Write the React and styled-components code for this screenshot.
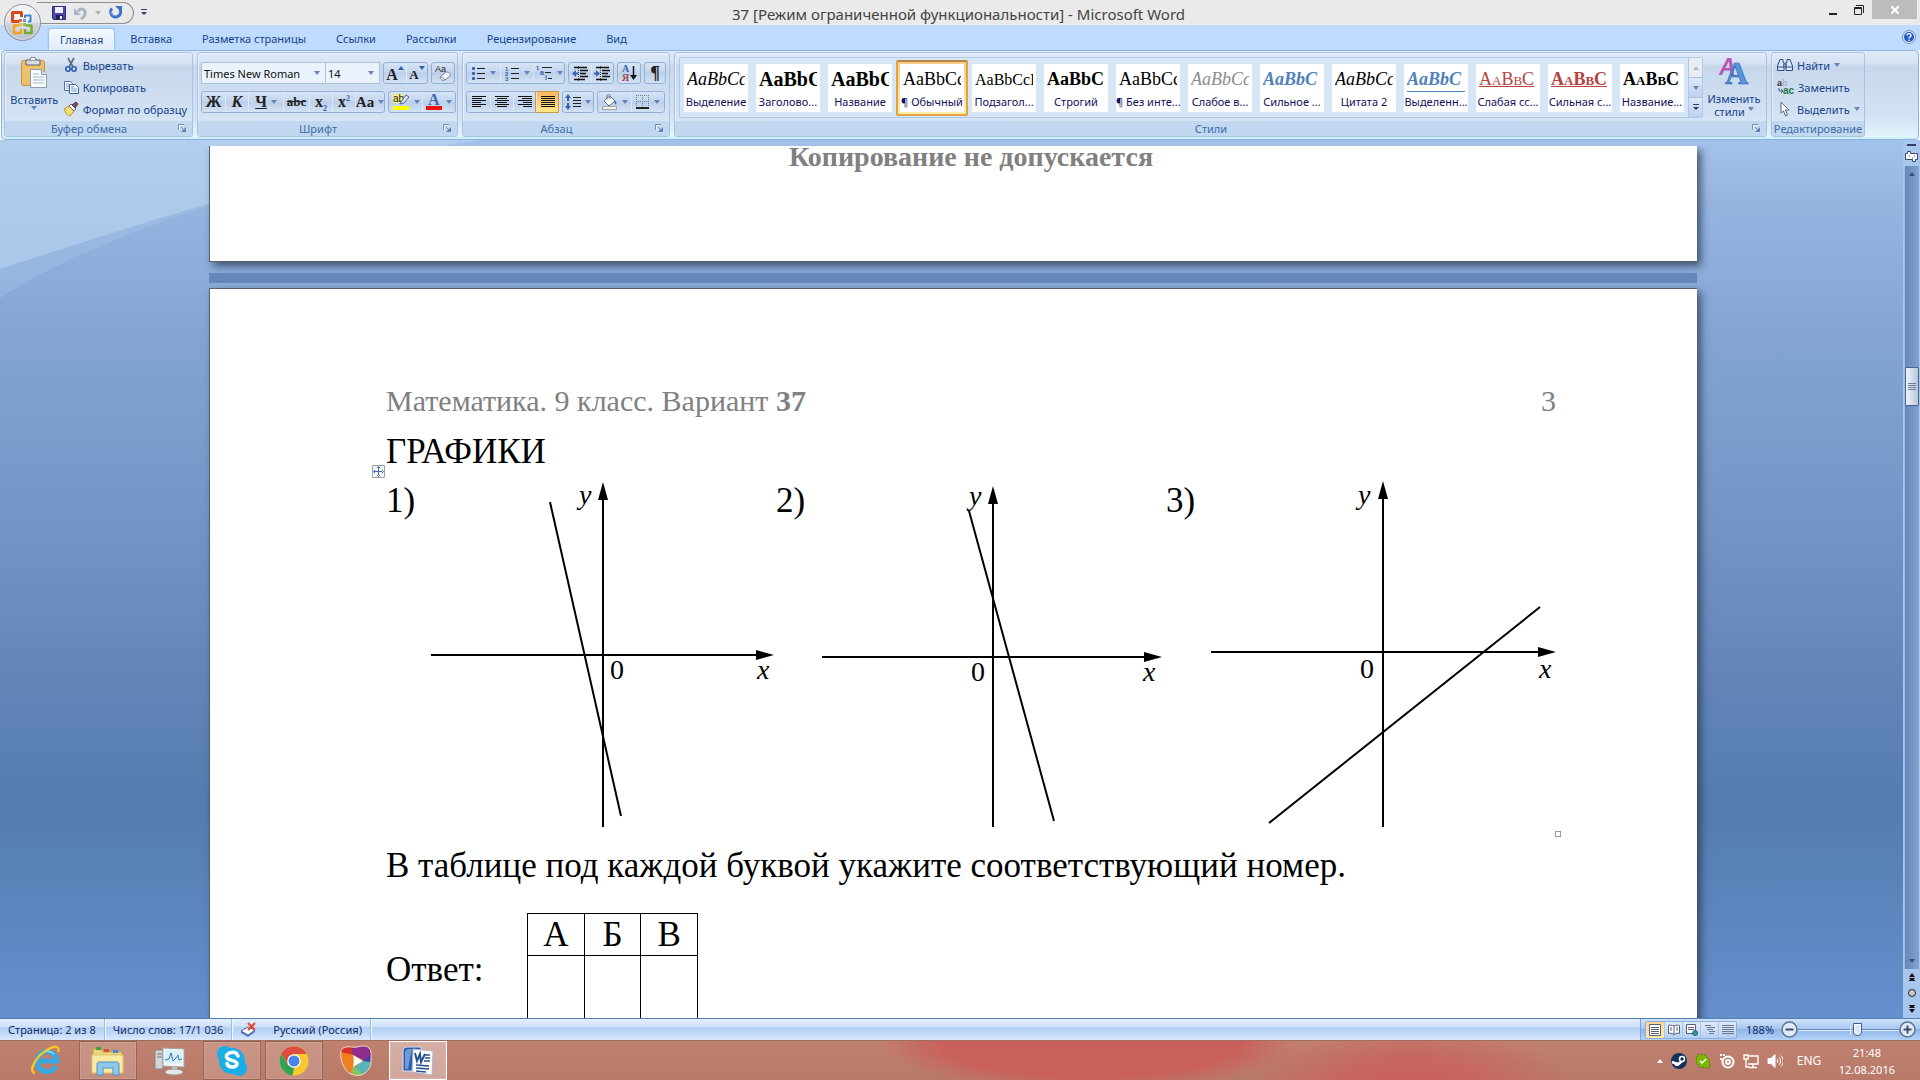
import React, { useState } from 'react';
import styled, { createGlobalStyle, css } from 'styled-components';

const GlobalStyle = createGlobalStyle`
  * {
    box-sizing: border-box;
  }

  body {
    margin: 0;
    overflow: hidden;
    font-family: "Noto Sans", "Open Sans", sans-serif;
    font-size: 11px;
    color: #15428b;
  }

  button, select, input {
    font: inherit;
    color: inherit;
    margin: 0;
    padding: 0;
    border: 0;
    background: none;
  }

  svg {
    display: block;
    flex: none;
  }
`;

const Window = styled.div`
  display: flex;
  flex-direction: column;
  height: 100vh;
`;

/* ---------- title bar ---------- */

const TitleBar = styled.header`
  position: relative;
  display: flex;
  align-items: flex-start;
  height: 25px;
  background: #eaeaea;
`;

const OrbButton = styled.button`
  position: absolute;
  left: 3px;
  top: 3px;
  z-index: 2;
`;

const QuickAccess = styled.div`
  display: flex;
  align-items: center;
  gap: 8px;
  height: 22px;
  width: 97px;
  margin: 2px 0 0 37px;
  padding-left: 15px;
  border: 1px solid #8f8f8f;
  border-left: 0;
  border-radius: 0 11px 11px 0;
`;

const QuickRow = styled.div`
  display: flex;
  flex: 1;
  align-items: center;
  gap: 7px;
`;

const Title = styled.h1`
  margin: 0;
  padding-top: 3px;
  font-size: 15px;
  line-height: 22px;
  font-weight: 400;
  color: #444;
`;

const WindowButtons = styled.div`
  display: flex;
  flex: 1;
  justify-content: flex-end;
  padding-right: 3px;
`;

const WindowButton = styled.button`
  display: flex;
  align-items: center;
  justify-content: center;
  width: ${(p) => (p.$close ? '45px' : '26px')};
  height: 19px;
  background: ${(p) => (p.$close ? '#bcbcbc' : 'transparent')};
`;

/* ---------- tabs ---------- */

const Tabs = styled.nav`
  display: flex;
  align-items: flex-end;
  height: 25px;
  padding: 0 4px 0 48px;
  background: #bfdbff;
`;

const Tab = styled.button`
  height: 22px;
  padding: 0 ${(p) => (p.$active ? '11px' : '15px')};
  line-height: 22px;
  white-space: nowrap;
  ${(p) =>
    p.$active &&
    css`
      background: linear-gradient(#f4f9ff, #e2ecf8);
      border: 1px solid #9fc4ee;
      border-bottom: 0;
      border-radius: 4px 4px 0 0;
      box-shadow: 0 0 2px #7fd6e8;
    `}
`;

const HelpButton = styled.button`
  margin: 0 0 6px auto;
`;

/* ---------- ribbon ---------- */

const Ribbon = styled.section`
  display: flex;
  gap: 4px;
  height: 90px;
  margin: 0 1px;
  padding: 1px 53px 2px 2px;
  border: 1px solid #8db2e3;
  border-radius: 4px;
  background: linear-gradient(#e0ebf8 0, #d5e2f2 14%, #c8d8ec 17%, #d3e3f4 75%, #e3f6fd 100%);
  box-shadow: inset 0 -2px 0 #cdf1f8;
`;

const Group = styled.div`
  display: flex;
  flex-direction: column;
  flex: ${(p) => (p.$width ? 'none' : '1')};
  width: ${(p) => (p.$width ? `${p.$width}px` : 'auto')};
  min-width: 0;
  border: 1px solid #a9c3e2;
  border-radius: 3px;
  box-shadow: inset 1px 1px 0 #e7f0fa;
`;

const GroupBody = styled.div`
  display: flex;
  flex: 1;
  min-height: 0;
  padding: ${(p) => p.$pad || '0 3px'};
  gap: ${(p) => p.$gap || '0'};
`;

const GroupLabel = styled.div`
  display: flex;
  align-items: center;
  height: 15px;
  line-height: 15px;
  color: #3e6aaa;
  background: #c1d8f0;
  border-radius: 0 0 2px 2px;

  span {
    flex: 1;
    text-align: center;
  }

  button {
    padding: 0 5px;
  }
`;

const BigButton = styled.button`
  display: flex;
  flex-direction: column;
  align-items: center;
  width: ${(p) => p.$width}px;
  padding-top: 4px;
  line-height: 13px;

  svg:first-child {
    margin-bottom: 5px;
  }
`;

const BigLine = styled.span`
  display: flex;
  align-items: center;
  gap: 3px;
`;

const SmallStack = styled.div`
  display: flex;
  flex-direction: column;
  padding-top: 1px;
`;

const SmallButton = styled.button`
  display: flex;
  align-items: center;
  gap: 4px;
  height: 22px;
  padding: 0 2px;
  white-space: nowrap;
`;

const Rows = styled.div`
  display: flex;
  flex-direction: column;
  gap: 7px;
  padding-top: 9px;
`;

const Row = styled.div`
  display: flex;
  gap: 3px;
`;

const Cluster = styled.div`
  display: flex;
  height: 22px;
  border: 1px solid #93b1d8;
  border-radius: 3px;
  background: linear-gradient(#d6e4f5, #c4d6ee 45%, #bccfe9 50%, #d3e2f4);
`;

const Tool = styled.button`
  display: flex;
  align-items: center;
  justify-content: center;
  gap: 4px;
  width: ${(p) => p.$width || 23}px;
  color: #222;

  & + & {
    border-left: 1px solid #dce8f6;
  }

  ${(p) =>
    p.$on &&
    css`
      background: linear-gradient(#fbb964, #fdd072 50%, #ffe58c);
      box-shadow: 0 0 0 1px #c99a4c;
    `}
`;

const SizeTool = styled(Tool)`
  gap: 0;
  align-items: flex-start;
  padding-top: 3px;
`;

const Glyph = styled.span`
  font-family: "Liberation Serif", serif;
  font-size: ${(p) => p.$size || 16}px;
  line-height: 18px;
  font-weight: 700;
  font-style: ${(p) => (p.$italic ? 'italic' : 'normal')};
  text-decoration: ${(p) => p.$deco || 'none'};

  sub, sup {
    font-size: 8px;
    line-height: 0;
    color: #2f62ad;
  }
`;

const Combo = styled.div`
  display: flex;
  align-items: center;
  width: ${(p) => p.$width}px;
  height: 22px;
  padding-right: 5px;
  border: 1px solid #abc1de;
  background: #eaf2fb;

  & + & {
    border-left: 0;
  }

  select {
    flex: 1;
    min-width: 0;
    height: 20px;
    padding-left: 2px;
    color: #111;
    appearance: none;
    outline: none;
  }
`;

const Combos = styled.div`
  display: flex;
`;

/* ---------- style gallery ---------- */

const Gallery = styled.div`
  display: flex;
  flex: 1;
  min-width: 0;
  height: 61px;
  margin-top: 4px;
  border: 1px solid #b1c9e8;
  border-radius: 2px;
  background: #d7e6f7;
`;

const GalleryItems = styled.div`
  display: flex;
  flex: 1;
  align-items: center;
  min-width: 0;
  overflow: hidden;
`;

const GalleryItem = styled.button`
  display: flex;
  flex-direction: column;
  flex: none;
  width: 72px;
  height: 56px;
  padding: 4px;
  ${(p) =>
    p.$selected &&
    css`
      border: 2px solid #e2a344;
      border-top-color: #b98549;
      border-radius: 2px;
      padding: 2px;
      background: linear-gradient(#f6c987, #fff0a8);
    `}
`;

const Tile = styled.span`
  display: flex;
  flex-direction: column;
  width: 64px;
  height: 48px;
  padding: 3px 0 0;
  background: #fff;
`;

const Sample = styled.span`
  display: block;
  width: 58px;
  height: 25px;
  margin: 0 3px 2px;
  overflow: hidden;
  white-space: nowrap;
  text-align: left;
  line-height: 25px;
  color: #000;
  font-family: "Liberation Serif", serif;
  font-size: 18px;
  ${(p) => p.$look}
`;

const TileName = styled.span`
  width: 64px;
  white-space: nowrap;
  text-align: center;
  font-size: 11px;
  line-height: 16px;
  color: #10105c;
`;

const GalleryScroll = styled.div`
  display: flex;
  flex-direction: column;
  width: 14px;

  button {
    display: flex;
    flex: 1;
    align-items: center;
    justify-content: center;
    border-left: 1px solid #b1c9e8;
    background: linear-gradient(#dbe8f7, #bdd2ee);
  }

  button + button {
    border-top: 1px solid #a5c0e2;
  }

  button:first-child {
    background: #e9edf2;
  }
`;

/* ---------- document ---------- */

const Workspace = styled.main`
  position: relative;
  display: flex;
  flex: 1;
  min-height: 0;
  background: linear-gradient(
    #a3c2eb 0,
    #94b4e0 8%,
    #84a5d4 22%,
    #7296c6 43%,
    #6285b8 62%,
    #547cb0 76%,
    #6590ce 100%
  );
`;

const Swoosh = styled.svg`
  position: absolute;
  left: 0;
  top: 0;
`;

const Pages = styled.div`
  position: relative;
  display: flex;
  flex-direction: column;
  align-items: center;
  flex: 1;
  min-width: 0;
  margin-top: 6px;
  padding-left: 3px;
  overflow: hidden;
`;

const Page = styled.article`
  flex: none;
  width: 1488px;
  max-width: 100%;
  padding: 0 141px 0 176px;
  border: 1px solid #56606e;
  border-right-width: 0;
  background: #fff;
  box-shadow: 4px 4px 8px rgba(40, 52, 76, 0.75);
  font-family: "Liberation Serif", serif;
  color: #000;
`;

const PageTail = styled(Page)`
  display: flex;
  flex-direction: column;
  justify-content: flex-end;
  height: 116px;
  padding-bottom: 88px;
  border-top: 0;
`;

const TailClip = styled.div`
  flex: none;
  font-size: 28px;
  line-height: 32px;
  font-weight: 700;
  text-align: center;
  color: #808080;
`;

const PageGap = styled.div`
  flex: none;
  width: 1488px;
  max-width: 100%;
  height: 10px;
  margin: 11px 0 5px;
  background: #6588bc;
`;

const RunningHead = styled.div`
  display: flex;
  justify-content: space-between;
  margin-top: 95px;
  font-size: 30px;
  line-height: 34px;
  color: #808080;
`;

const Paragraph = styled.p`
  margin: ${(p) => p.$top || 0}px 0 0;
  font-size: 35px;
  line-height: 40px;
`;

const Plots = styled.div`
  position: relative;
  display: grid;
  grid-template-columns: repeat(3, 1fr);
  margin-top: 8px;
  padding-right: 3px;
`;

const Plot = styled.div`
  display: flex;
  font-size: 35px;
  line-height: 42px;

  span {
    width: 40px;
  }
`;

const MoveHandle = styled.button`
  position: absolute;
  left: -14px;
  top: -15px;
`;

const SizeHandle = styled.i`
  position: absolute;
  right: -5px;
  bottom: -7px;
  width: 6px;
  height: 6px;
  border: 1px solid #999;
`;

const Answer = styled.div`
  display: flex;
  margin-top: 27px;

  p {
    width: 141px;
  }
`;

const AnswerTable = styled.table`
  width: 171px;
  border-collapse: collapse;
  table-layout: fixed;
  font-size: 35px;
  line-height: 40px;

  th, td {
    height: 41px;
    padding: 1px 0 0;
    border: 1px solid #000;
    font-weight: 400;
    text-align: center;
  }

  td {
    height: 80px;
  }
`;

const ScrollRail = styled.div`
  position: relative;
  display: flex;
  flex-direction: column;
  align-items: center;
  width: 17px;
  padding-top: 4px;
  background: #a9c6ee;
`;

const Track = styled.div`
  display: flex;
  flex-direction: column;
  align-items: center;
  justify-content: space-between;
  flex: 1;
  width: 15px;
  margin-top: 4px;
  padding: 6px 0;
  background: linear-gradient(90deg, #6588b8, #7597c6 60%, #86a3cc);
  border-left: 1px solid #9dbce8;
`;

const Thumb = styled.button`
  display: flex;
  flex-direction: column;
  align-items: center;
  justify-content: center;
  gap: 1px;
  width: 14px;
  height: 39px;
  border: 1px solid #4d628c;
  border-radius: 1px;
  background: linear-gradient(90deg, #eef2f8, #d5dfec 50%, #b6c6dc);

  i {
    width: 8px;
    height: 1px;
    background: #6d7f99;
  }
`;

const Spacer = styled.div`
  flex: ${(p) => p.$grow};
`;

const BrowseButtons = styled.div`
  display: flex;
  flex-direction: column;
  align-items: center;
  gap: 8px;
  padding: 4px 0 5px;
`;

/* ---------- status bar ---------- */

const StatusBar = styled.footer`
  display: flex;
  align-items: stretch;
  height: 22px;
  border-top: 1px solid #567db1;
  background: linear-gradient(#e3effd 0, #cfe1f8 35%, #b3cff3 42%, #c3daf7 70%, #dae9fc 100%);
  color: #10296b;
  line-height: 20px;
`;

const StatusCell = styled.button`
  display: flex;
  align-items: center;
  gap: 16px;
  padding: 0 8px;
  white-space: nowrap;
  border-right: 1px solid #9dbce4;
  box-shadow: 1px 0 0 #f2f8ff;
`;

const StatusRight = styled.div`
  display: flex;
  align-items: center;
  margin-left: auto;
  padding: 0 4px;
  border-left: 1px solid #7ea2d3;
  background: linear-gradient(#cfe2fa, #a9c8f0 45%, #8fb5e8 50%, #b4d2f7);
`;

const Views = styled.div`
  display: flex;
  margin-right: 9px;
  border: 1px solid #8aaede;
  border-radius: 2px;
  background: linear-gradient(#dfeafa, #b6cff2);

  button {
    display: flex;
    align-items: center;
    justify-content: center;
    width: 18px;
    height: 16px;
  }

  button + button {
    border-left: 1px solid #a9c6ed;
  }

  button:first-child {
    background: linear-gradient(#fbd59a, #ffe9a5);
  }
`;

const ZoomValue = styled.button`
  width: 28px;
  margin-right: 7px;
  text-align: left;
`;

const ZoomSlider = styled.input`
  width: 101px;
  height: 18px;
  appearance: none;
  background:
    linear-gradient(#e4effc, #e4effc) 52px 5px / 1px 9px no-repeat,
    linear-gradient(#5f88bf, #5f88bf) 0 8px / 100% 1px no-repeat,
    linear-gradient(#e4effc, #e4effc) 0 9px / 100% 1px no-repeat;

  &::-webkit-slider-thumb {
    appearance: none;
    width: 9px;
    height: 13px;
    background: #dce9fa;
    border: 1px solid #3e5c92;
    border-radius: 1px 1px 5px 5px;
    box-shadow: inset 0 0 0 1px #fff;
  }
`;

/* ---------- taskbar ---------- */

const Taskbar = styled.footer`
  display: flex;
  align-items: stretch;
  height: 40px;
  padding: 0 0 0 17px;
  border-top: 1px solid #a06d61;
  background:
    radial-gradient(ellipse 210px 48px at 1090px 2px, #c9605a 0, #c9605a 70%, rgba(201, 96, 90, 0) 100%),
    radial-gradient(ellipse 160px 60px at 1410px 44px, #c75f5a 0, #c8665f 40%, rgba(201, 96, 90, 0) 100%),
    linear-gradient(#c08170, #b97968);
  color: #fff;
`;

const TaskButton = styled.button`
  display: flex;
  align-items: center;
  justify-content: center;
  width: 58px;
  margin-right: 4px;
  border: 1px solid transparent;
  ${(p) =>
    p.$open &&
    css`
      border-color: #966558;
      background: rgba(255, 255, 255, 0.16);
      box-shadow: inset 0 0 0 1px rgba(255, 255, 255, 0.12);
    `}
  ${(p) =>
    p.$active &&
    css`
      border-color: #fff;
      background: rgba(255, 255, 255, 0.35);
    `}
`;

const Tray = styled.div`
  display: flex;
  align-items: center;
  gap: 8px;
  margin-left: auto;
  padding-right: 25px;
`;

const TrayText = styled.span`
  width: 24px;
  margin: 0 10px 0 6px;
  font-size: 12px;
`;

const Clock = styled.time`
  text-align: center;
  line-height: 17px;
`;

/* ---------- icons ---------- */

const Arrow = ({ color = '#5f86bd', up }) => (
  <svg width="6" height="4" viewBox="0 0 6 4">
    <path d={up ? 'M0 4h6L3 0z' : 'M0 0h6L3 4z'} fill={color} />
  </svg>
);

const Launcher = () => (
  <svg width="9" height="9" viewBox="0 0 9 9" fill="none">
    <path d="M.5 6V.5H6" stroke="#6a90c0" />
    <path d="M3 3l3 3" stroke="#6a90c0" />
    <path d="M8 3v5H3z" fill="#5f86b8" />
    <path d="M1.500 6V1.500H6" stroke="#fff" opacity=".8" />
  </svg>
);

const OfficeOrb = () => (
  <svg width="39" height="39" viewBox="0 0 39 39">
    <defs>
      <radialGradient id="orb" cx=".5" cy=".3" r=".75">
        <stop offset="0" stopColor="#fff" />
        <stop offset=".55" stopColor="#e1e4ec" />
        <stop offset="1" stopColor="#a9b0c2" />
      </radialGradient>
    </defs>
    <circle cx="19.500" cy="19.500" r="18" fill="url(#orb)" stroke="#8b909c" />
    <circle cx="19.500" cy="19.500" r="16.500" fill="none" stroke="#fff" opacity=".8" />
    <path d="M2.500 20a17 17 0 0 0 34 0z" fill="#b7bccb" opacity=".35" />
    <g fill="none" strokeLinejoin="round">
      <path d="M16 18.500H9.500v-9h9V14" stroke="#d9481b" strokeWidth="3" />
      <path d="M22 15v-2.500h5.500v6H25" stroke="#3f86cf" strokeWidth="2" />
      <path d="M16 22.500h-5v7.500h7v-4" stroke="#f0a51c" strokeWidth="2.500" />
      <path d="M23 22.500h5.500V30H22v-4" stroke="#6fae2e" strokeWidth="2.500" />
    </g>
    <path d="M16 16h3v3h-3z" fill="#e8692c" />
    <path d="M20 16h3v3h-3z" fill="#5aa0df" />
    <path d="M16 20h3v3h-3z" fill="#f5bd3b" />
    <path d="M20 20h3v3h-3z" fill="#8fc153" />
  </svg>
);

const SaveIcon = () => (
  <svg width="14" height="14" viewBox="0 0 14 14">
    <path d="M.5.5h13v13h-12l-1-1z" fill="#4a47ad" stroke="#2d2b86" />
    <path d="M3 1h8v6H3z" fill="#eef1fb" />
    <path d="M4 9h7v4H4z" fill="#222252" />
    <path d="M8 10h2v3H8z" fill="#fff" />
  </svg>
);

const UndoIcon = () => (
  <svg width="13" height="13" viewBox="0 0 13 13" fill="none">
    <path d="M4 4c4-4 8-1 7 3-.5 2-2 4-4 5" stroke="#a9b4c9" strokeWidth="3" />
    <path d="M0 1v7h7z" fill="#a9b4c9" />
  </svg>
);

const RedoIcon = () => (
  <svg width="14" height="14" viewBox="0 0 14 14" fill="none">
    <path d="M3 2.500a5 5 0 1 0 8 1" stroke="#3d72d0" strokeWidth="3" />
    <path d="M6 0h7v7z" fill="#3d72d0" />
    <path d="M2.500 5a5 5 0 0 0 2 5" stroke="#7fa8ec" />
  </svg>
);

const CustomizeIcon = () => (
  <svg width="6" height="7" viewBox="0 0 6 7" fill="#2d3f66">
    <path d="M0 0h6v1H0zM0 3h6L3 6z" />
  </svg>
);

const HelpIcon = () => (
  <svg width="14" height="14" viewBox="0 0 14 14">
    <circle cx="7" cy="7" r="6.500" fill="#dfe9fa" stroke="#7a8fb4" />
    <circle cx="7" cy="7" r="5" fill="#2257c8" />
    <path d="M5 5.500c0-2.500 4-2.500 4 0C9 7 7 6.800 7 8.500M7 9.500V11" stroke="#fff" strokeWidth="1.400" fill="none" />
  </svg>
);

const PasteIcon = () => (
  <svg width="27" height="31" viewBox="0 0 27 31">
    <rect x=".5" y="3.500" width="23" height="25" rx="2" fill="#ecc069" stroke="#c8953d" />
    <path d="M5 3h14v5H5z" fill="#d8dce2" stroke="#5e6370" />
    <path d="M9 3c0-4 6-4 6 0" fill="#f4f6f8" stroke="#5e6370" />
    <path d="M9.500 12.500h11l5 5v13h-16z" fill="#fbfcfe" stroke="#8c9bb5" />
    <path d="M20.500 12.500v5h5" fill="#dbe3f0" stroke="#8c9bb5" />
    <path d="M12 17h6M12 20h11M12 23h11M12 26h11" stroke="#a3b2ca" />
  </svg>
);

const CutIcon = () => (
  <svg width="16" height="16" viewBox="0 0 16 16" fill="none">
    <path d="M5 1l5 9M11 1L6 10" stroke="#5b6a83" strokeWidth="1.600" />
    <circle cx="5" cy="12" r="2.200" stroke="#2b5fb4" strokeWidth="1.600" />
    <circle cx="11" cy="12" r="2.200" stroke="#2b5fb4" strokeWidth="1.600" />
  </svg>
);

const CopyIcon = () => (
  <svg width="16" height="16" viewBox="0 0 16 16">
    <path d="M1.500 2.500h6l2 2v7h-8z" fill="#fff" stroke="#4d6fa8" />
    <path d="M3 5h3M3 7h4M3 9h4" stroke="#6f96d2" />
    <path d="M6.500 5.500h6l3 3v6h-9z" fill="#fff" stroke="#3a5f9e" />
    <path d="M8 8h3M8 10h6M8 12h6" stroke="#6f96d2" />
  </svg>
);

const BrushIcon = () => (
  <svg width="16" height="16" viewBox="0 0 16 16">
    <path d="M1 8l5-3 5 5-4 5C5 15 2 12 1 8z" fill="#f2dc74" stroke="#b78d2e" />
    <path d="M6 5l2-2 5 5-2 2z" fill="#fff" stroke="#666b78" />
    <path d="M9 4l4-3 2 2-3 4z" fill="#8f4a4a" stroke="#4a3d52" />
  </svg>
);

const ClearIcon = () => (
  <svg width="18" height="18" viewBox="0 0 18 18">
    <text x="1" y="8" fontFamily="Liberation Sans" fontSize="9" fill="#222">Aa</text>
    <path d="M6 13l6-5c3 0 5 2 4 4l-5 4c-3 1-5-1-5-3z" fill="#f6f7fa" stroke="#7c8596" />
    <path d="M6 13c2 0 4 1 5 3" fill="none" stroke="#7c8596" />
  </svg>
);

const HighlightIcon = () => (
  <svg width="18" height="18" viewBox="0 0 18 18">
    <path d="M1 1h10v9H1z" fill="#f5ee7f" />
    <text x="1" y="9" fontFamily="Liberation Sans" fontSize="10" fill="#222">ab</text>
    <path d="M9 9l5-7 3 2-5 6-4 1z" fill="#dfe6f1" stroke="#4a66a0" />
    <path d="M1 13h16v4H1z" fill="#ffff00" />
  </svg>
);

const FontColorIcon = () => (
  <svg width="16" height="18" viewBox="0 0 16 18">
    <text x="2" y="12" fontFamily="Liberation Serif" fontWeight="700" fontSize="16" fill="#3a66ad">A</text>
    <path d="M0 13h16v4H0z" fill="#ee1010" />
  </svg>
);

const ListIcon = ({ marks }) => (
  <svg width="15" height="15" viewBox="0 0 15 15">
    <path d="M6 2.500h8M6 7.500h8M6 12.500h8" stroke="#222" />
    {[2, 7, 12].map((y, i) =>
      marks ? (
        <text key={y} x="0" y={y + 3} fontFamily="Liberation Sans" fontWeight="700" fontSize="6" fill="#2f62ad">
          {marks[i]}
        </text>
      ) : (
        <rect key={y} x="1" y={y - 1} width="3" height="3" rx="1" fill="#2f62ad" />
      )
    )}
  </svg>
);

const MultiListIcon = () => (
  <svg width="17" height="16" viewBox="0 0 17 16" fill="#2f62ad">
    <path d="M6 2.500h10M9 7.500h6M12 13.500h4" stroke="#222" />
    <text x="0" y="5" fontFamily="Liberation Sans" fontWeight="700" fontSize="6">1</text>
    <text x="4" y="10" fontFamily="Liberation Sans" fontWeight="700" fontSize="7">a</text>
    <text x="9" y="15" fontFamily="Liberation Sans" fontWeight="700" fontSize="7">i</text>
  </svg>
);

const IndentIcon = ({ right }) => (
  <svg width="17" height="15" viewBox="0 0 17 15">
    <path d="M2 1.500h13M8 4.500h8M8 7.500h6M8 10.500h8M2 13.500h11" stroke="#111" strokeWidth="1.500" />
    <path d="M6.500 0v15" stroke="#444" strokeDasharray="1 1" />
    <path d={right ? 'M6 7.500L2 4v2.500H0v2h2V11z' : 'M0 7.500L4 4v2.500h2v2H4V11z'} fill="#3767b4" />
  </svg>
);

const SortIcon = () => (
  <svg width="16" height="18" viewBox="0 0 16 18">
    <text x="1" y="8" fontFamily="Liberation Serif" fontWeight="700" fontSize="10" fill="#2f62ad">А</text>
    <text x="1" y="17" fontFamily="Liberation Serif" fontWeight="700" fontSize="10" fill="#a5443f">Я</text>
    <path d="M12.500 2v11" stroke="#111" strokeWidth="1.500" />
    <path d="M9 11h7l-3.500 5z" fill="#111" />
  </svg>
);

const AlignIcon = ({ widths, side = 'left' }) => (
  <svg width="14" height="12" viewBox="0 0 14 12">
    {widths.map((w, i) => {
      const x = side === 'right' ? 14 - w : side === 'center' ? (14 - w) / 2 : 0;
      return <rect key={i} x={x} y={i * 2} width={w} height="1" fill="#111" />;
    })}
  </svg>
);

const SpacingIcon = () => (
  <svg width="16" height="16" viewBox="0 0 16 16">
    <path d="M3 0L0 4h2v3h2V4h2zM3 16l-3-4h2V9h2v3h2z" fill="#2f62ad" />
    <path d="M8 3.500h8M8 6.500h8M8 9.500h8M8 12.500h8" stroke="#222" />
  </svg>
);

const BucketIcon = () => (
  <svg width="17" height="16" viewBox="0 0 17 16">
    <path d="M3 7l6-5 5 5-6 5z" fill="#fff" stroke="#69717f" />
    <path d="M6 5V2c0-2 3-2 3 0v3" fill="none" stroke="#69717f" />
    <path d="M13 6c2 1 3 3 2 5-1-1-2-3-2-5z" fill="#3767b4" />
    <path d="M1.500 12.500h14v3h-14z" fill="#f5f5ea" stroke="#9ba3af" />
  </svg>
);

const BordersIcon = () => (
  <svg width="14" height="14" viewBox="0 0 14 14" fill="none">
    <path d="M.5 0v13M6.500 0v13M12.500 0v13M0 .5h13M0 6.500h13" stroke="#6f7f98" strokeDasharray="1 1" />
    <path d="M0 13h13" stroke="#222" strokeWidth="2" />
  </svg>
);

const ChangeStylesIcon = () => (
  <svg width="30" height="30" viewBox="0 0 30 30" fontFamily="Liberation Serif" fontWeight="700">
    <text x="0" y="18" fontSize="23" fill="#b657b4" fontFamily="Liberation Sans" fontStyle="italic">A</text>
    <text x="6" y="27" fontSize="32" fill="#5b96dc" stroke="#2e65b0" strokeWidth=".7">A</text>
  </svg>
);

const FindIcon = () => (
  <svg width="16" height="14" viewBox="0 0 16 14" fill="#dce6f5" stroke="#2b4c86">
    <path d="M3 1.500h3v3h1v8H.5V8zM13 1.500h-3v3H9v8h6.500V8z" />
    <path d="M7 6h2v3H7zM1 9h6M9 9h6" />
  </svg>
);

const ReplaceIcon = () => (
  <svg width="17" height="16" viewBox="0 0 17 16" fontFamily="Liberation Sans" fontWeight="700">
    <text x="0" y="7" fontSize="9" fill="#333">a</text>
    <text x="5" y="7" fontSize="9" fill="#aab2c0">b</text>
    <text x="6" y="15" fontSize="10" fill="#1e7a3b">ac</text>
    <path d="M2 9v3h3M4 10l2 2-2 2" stroke="#2f62ad" fill="none" />
  </svg>
);

const PointerIcon = () => (
  <svg width="16" height="16" viewBox="0 0 16 16">
    <path d="M4 1l8 8H8.500l2 5-2 1-2-5L4 12z" fill="#fff" stroke="#5b6679" />
  </svg>
);

const ProofIcon = () => (
  <svg width="17" height="16" viewBox="0 0 17 16">
    <path d="M1 9l7-4 7 3-7 5z" fill="#fff" stroke="#4b5f93" />
    <path d="M1 9v2l7 4v-2zM8 15l7-5V8l-7 5z" fill="#5577bb" />
    <path d="M8 1l7 7M15 1L8 8" stroke="#e8432c" strokeWidth="2" />
  </svg>
);

const ViewIcon = ({ kind }) => (
  <svg width="12" height="12" viewBox="0 0 12 12" fill="none" stroke="#55607a">
    {kind === 'print' && <path d="M.5.500h11v11H.5zM2 3.500h8M2 5.500h8M2 7.500h8M2 9.500h8" fill="#fff" />}
    {kind === 'read' && <path d="M6 2C4 1 2 1 .5 1.500v8C2 9 4 9 6 10.500 8 9 10 9 11.500 9.500v-8C10 1 8 1 6 2zM6 2v9M2 4h2M2 6h2M8 4h2M8 6h2" fill="#fff" />}
    {kind === 'web' && (
      <>
        <path d="M.5.500h9v9h-9zM2 3.500h6M2 5.500h6" fill="#fff" />
        <circle cx="9" cy="9" r="2.500" fill="#2f9a8a" stroke="#2b62a8" />
      </>
    )}
    {kind === 'outline' && <path d="M1 1.500h6M3 3.500h8M3 5.500h6M5 7.500h6M5 9.500h5" stroke="#6b7890" />}
    {kind === 'draft' && <path d="M0 1.500h12M0 3.500h12M0 5.500h12M0 7.500h12M0 9.500h12" stroke="#6b7890" />}
  </svg>
);

const ZoomButtonIcon = ({ plus }) => (
  <svg width="17" height="17" viewBox="0 0 17 17">
    <circle cx="8.500" cy="8.500" r="7.500" fill="#dfe9f7" stroke="#5d7192" strokeWidth="1.500" />
    <path d={plus ? 'M4.500 8.500h8M8.500 4.500v8' : 'M4.500 8.500h8'} stroke="#3c4c6b" strokeWidth="2" />
  </svg>
);

const RulerIcon = () => (
  <svg width="13" height="12" viewBox="0 0 13 12" fill="#fff" stroke="#3a4a70">
    <path d="M.5 3.500h2v-2h3v2h7v6h-2v2h-3v-2h-7z" />
    <path d="M4 6h1M7 8h1M9 6h1" />
  </svg>
);

const DoubleArrow = ({ down }) => (
  <svg width="8" height="8" viewBox="0 0 8 8" fill="#111">
    <path d={down ? 'M1 0h6v1H5.500L7 3H1L2.500 1H1zM1 4h6L4 8z' : 'M1 4h6L4 0zM1 8h6V7H5.500L7 5H1L2.500 7H1z'} />
  </svg>
);

const BrowseDot = () => (
  <svg width="8" height="8" viewBox="0 0 8 8">
    <circle cx="4" cy="4" r="3.500" fill="#c9c9c9" stroke="#222" />
  </svg>
);

const IeIcon = () => (
  <svg width="32" height="32" viewBox="0 0 32 32" fill="none">
    <path d="M26 21a10 10 0 1 1 1-5H9" stroke="#35a9e0" strokeWidth="5" />
    <path d="M24 9a9 9 0 0 0-13 0" stroke="#8edcf8" strokeWidth="1.500" />
    <path d="M5 28C-2 27 5 12 17 5c8-5 13-4 11 2" stroke="#f6c426" strokeWidth="2.500" />
  </svg>
);

const FolderIcon = () => (
  <svg width="34" height="32" viewBox="0 0 34 32">
    <path d="M2 4h8l2 3h19v20H2z" fill="#f0d479" stroke="#caa648" />
    <path d="M5 2h5v3H5z" fill="#3da33b" />
    <path d="M13 4h5v3h-5z" fill="#d4562c" />
    <path d="M22 5h5v3h-5z" fill="#3c8fd6" />
    <path d="M1 10h31v18H1z" fill="#f8eaa2" stroke="#dcc46c" />
    <path d="M6 30V19c0-1 1-2 2-2h18c1 0 2 1 2 2v11h-6v-7H12v7z" fill="#8ec7ea" stroke="#4b95c8" />
  </svg>
);

const MonitorIcon = () => (
  <svg width="32" height="30" viewBox="0 0 32 30">
    <path d="M1 4h8v19H1z" fill="#d4d5d7" stroke="#85878b" />
    <path d="M3 8h5M3 11h5" stroke="#777" />
    <path d="M9 2l21 1v18L9 20z" fill="#f4f6f8" stroke="#a4a7ab" />
    <path d="M11 4l17 1v13l-17-1z" fill="#d9eef8" />
    <path d="M11 14l4-1 2-6 2 8 3-3 2-3 1 5 3-1" stroke="#2f7fb5" fill="none" />
    <path d="M18 21h5v4h-5z" fill="#c5c8cc" />
    <ellipse cx="20" cy="26" rx="9" ry="3" fill="#e6e8ea" stroke="#9a9da2" />
  </svg>
);

const SkypeIcon = () => (
  <svg width="32" height="32" viewBox="0 0 32 32">
    <circle cx="16" cy="16" r="13" fill="#18aee8" />
    <circle cx="9" cy="9" r="8" fill="#18aee8" />
    <circle cx="23" cy="23" r="8" fill="#18aee8" />
    <path d="M22 11c-1-3-4-4-7-3.500-4 .5-5.500 3.500-4 5.500 2 3 10 2 10 6s-9 4-10-.5" fill="none" stroke="#fff" strokeWidth="3.500" strokeLinecap="round" />
  </svg>
);

const ChromeIcon = () => (
  <svg width="30" height="30" viewBox="0 0 30 30">
    <circle cx="15" cy="15" r="14.500" fill="#fbc82f" />
    <path d="M15 .5A14.500 14.500 0 0 1 27.600 8H15L9 19 2.400 7.800A14.500 14.500 0 0 1 15 .5z" fill="#df4b3c" />
    <path d="M2.400 7.800L9 19l6 3-1.500 7.400A14.500 14.500 0 0 1 2.400 7.800z" fill="#2fa457" />
    <circle cx="15" cy="15" r="6.800" fill="#fff" />
    <circle cx="15" cy="15" r="5.500" fill="#4a83ec" />
  </svg>
);

const PlayerIcon = () => (
  <svg width="32" height="32" viewBox="0 0 32 32">
    <defs>
      <clipPath id="player">
        <path d="M6 2c4-1 7 1 11 0s9-2 12 1 2 8 2 13-2 9-6 12-9 3-14 1S2 20 1 13 1 3 6 2z" />
      </clipPath>
    </defs>
    <g clipPath="url(#player)">
      <path d="M0 0h32v32H0z" fill="#f07f22" />
      <path d="M0 0h12l2 10L0 7z" fill="#d6322c" />
      <path d="M11 0h21v11l-9 4-10-5z" fill="#8f2d8e" />
      <path d="M32 9v9l-10-2z" fill="#4a3fa0" />
      <path d="M22 16l10 1v15H20l-6-9z" fill="#58b4b6" />
      <path d="M13 21l12 11H10z" fill="#8cc45c" />
    </g>
    <path d="M13 10l10 6-10 6c1-4 1-8 0-12z" fill="#fff" />
    <path d="M6 2c4-1 7 1 11 0s9-2 12 1 2 8 2 13-2 9-6 12-9 3-14 1S2 20 1 13 1 3 6 2z" fill="none" stroke="#f3dcd6" />
  </svg>
);

const WordIcon = () => (
  <svg width="32" height="30" viewBox="0 0 32 30">
    <path d="M1 5c0-3 2-4 5-4h13v24H1z" fill="#2e5aa6" stroke="#d5e1f5" />
    <path d="M3 6c0-2 2-3 4-3h3L6 23H3z" fill="#6f9ad8" />
    <path d="M11 3l20 2-1 24-20-3z" fill="#fbfcff" stroke="#a9b7d0" />
    <path d="M13 7l2 8 3-7 1 8 4-8" stroke="#27508f" strokeWidth="2" fill="none" />
    <path d="M23 9h5M23 12h5M22 15h6M14 19l13 1M14 22l13 1M14 25l10 1" stroke="#27508f" strokeWidth="1.500" />
  </svg>
);

const SteamIcon = () => (
  <svg width="16" height="16" viewBox="0 0 16 16">
    <circle cx="8" cy="8" r="8" fill="#13315c" />
    <path d="M1 9l6 2.500L11 8" stroke="#fff" strokeWidth="2.500" fill="none" />
    <circle cx="11" cy="6" r="2.500" fill="#13315c" stroke="#fff" strokeWidth="1.500" />
    <circle cx="5.500" cy="11" r="2" fill="#fff" />
  </svg>
);

const CheckTrayIcon = () => (
  <svg width="16" height="16" viewBox="0 0 16 16">
    <path d="M3 1l7 1 4 4 1 8-4 1-6-1-4-5 1-6z" fill="#7cb800" stroke="#5d7a1e" strokeDasharray="2 1" />
    <path d="M5 8l2 2 4-4" stroke="#fff" strokeWidth="1.500" fill="none" />
  </svg>
);

const TargetTrayIcon = () => (
  <svg width="16" height="16" viewBox="0 0 16 16" fill="none" stroke="#fff">
    <circle cx="9" cy="9" r="5.500" strokeWidth="2" />
    <circle cx="9" cy="9" r="2" strokeWidth="2" />
    <path d="M1 2h2M5 1v2M1 6h2" strokeWidth="2" />
  </svg>
);

const NetworkTrayIcon = () => (
  <svg width="16" height="16" viewBox="0 0 16 16" fill="none" stroke="#fff" strokeWidth="1.400">
    <path d="M6 3h9v8H5M10 11v3M6 14.500h8" />
    <path d="M1 2h4v4H1zM3 6v8h3" />
  </svg>
);

const VolumeTrayIcon = () => (
  <svg width="16" height="16" viewBox="0 0 16 16" fill="none" stroke="#fff">
    <path d="M1 5.500h3l4-4v13l-4-4H1z" fill="#fff" />
    <path d="M10 6c1 1 1 3 0 4M12 4c2 2 2 6 0 8M14 2.500c3 3 3 8 0 11" />
  </svg>
);

/* ---------- data ---------- */

const tabs = ['Главная', 'Вставка', 'Разметка страницы', 'Ссылки', 'Рассылки', 'Рецензирование', 'Вид'];

const styleTiles = [
  { name: 'Выделение', sample: 'AaBbCc', look: 'font-style: italic;' },
  { name: 'Заголово...', sample: 'AaBbC', look: 'font-weight: 700; font-size: 20px;' },
  { name: 'Название', sample: 'AaBbC', look: 'font-weight: 700; font-size: 20px;' },
  { name: '¶ Обычный', sample: 'AaBbCc', selected: true },
  { name: 'Подзагол...', sample: 'AaBbCcI', look: 'font-size: 16px;' },
  { name: 'Строгий', sample: 'AaBbC', look: 'font-weight: 700;' },
  { name: '¶ Без инте...', sample: 'AaBbCc' },
  { name: 'Слабое в...', sample: 'AaBbCc', look: 'font-style: italic; color: #8c8c8c;' },
  { name: 'Сильное ...', sample: 'AaBbC', look: 'font-style: italic; font-weight: 700; color: #4f81bd;' },
  { name: 'Цитата 2', sample: 'AaBbCc', look: 'font-style: italic;' },
  {
    name: 'Выделенн...',
    sample: 'AaBbC',
    look: 'font-style: italic; font-weight: 700; color: #4f81bd; border-bottom: 1px solid #4f81bd;',
  },
  {
    name: 'Слабая сс...',
    sample: 'AaBbC',
    look: 'font-variant: small-caps; color: #b8433f; text-decoration: underline;',
  },
  {
    name: 'Сильная с...',
    sample: 'AaBbC',
    look: 'font-variant: small-caps; font-weight: 700; color: #b8433f; text-decoration: underline;',
  },
  { name: 'Название...', sample: 'AaBbC', look: 'font-variant: small-caps; font-weight: 700;' },
];

// all coordinates are in the 350x350 box of one plot
const plots = [
  { ax: 177, top: 2, ay: 175, from: 5, to: 348, line: [124, 22, 195, 336], y: [153, 24], zero: [184, 199], x: [331, 199] },
  { ax: 177, top: 6, ay: 177, from: 6, to: 346, line: [153, 31, 238, 341], y: [153, 25], zero: [155, 201], x: [327, 201] },
  { ax: 177, top: 1, ay: 172, from: 5, to: 350, line: [63, 343, 334, 127], y: [152, 24], zero: [154, 198], x: [333, 198] },
];

const PlotDrawing = ({ plot }) => {
  const { ax, top, ay, from, to, line, y, zero, x } = plot;
  return (
    <svg width="350" height="350" viewBox="0 0 350 350" fontFamily="Liberation Serif, serif" fontSize="28">
      <g stroke="#000" strokeWidth="2">
        <path d={`M${ax} ${top + 10}V347M${from} ${ay}H${to - 10}`} />
        <path d={`M${line[0]} ${line[1]}L${line[2]} ${line[3]}`} />
      </g>
      <path d={`M${ax} ${top}l5 18h-10zM${to} ${ay}l-18 5v-10z`} />
      <text x={y[0]} y={y[1]} fontStyle="italic">y</text>
      <text x={zero[0]} y={zero[1]}>0</text>
      <text x={x[0]} y={x[1]} fontStyle="italic">x</text>
    </svg>
  );
};

const RibbonGroup = ({ label, width, launcher = true, pad, gap, children }) => (
  <Group $width={width}>
    <GroupBody $pad={pad} $gap={gap}>{children}</GroupBody>
    <GroupLabel>
      <span>{label}</span>
      {launcher && (
        <button aria-label={label}>
          <Launcher />
        </button>
      )}
    </GroupLabel>
  </Group>
);

function App() {
  const [tab, setTab] = useState('Главная');
  const [zoom, setZoom] = useState(188);

  return (
    <>
      <GlobalStyle />
      <Window>
        <TitleBar>
          <OrbButton aria-label="Office"><OfficeOrb /></OrbButton>
          <QuickRow>
            <QuickAccess>
              <button aria-label="Сохранить"><SaveIcon /></button>
              <button aria-label="Отменить"><UndoIcon /></button>
              <Arrow color="#b3b3b3" />
              <button aria-label="Повторить"><RedoIcon /></button>
            </QuickAccess>
            <button aria-label="Настройка панели"><CustomizeIcon /></button>
          </QuickRow>
          <Title>37 [Режим ограниченной функциональности] - Microsoft Word</Title>
          <WindowButtons>
            <WindowButton aria-label="Свернуть">
              <svg width="8" height="12" viewBox="0 0 8 12"><path d="M0 9h8v2H0z" fill="#222" /></svg>
            </WindowButton>
            <WindowButton aria-label="Восстановить">
              <svg width="10" height="10" viewBox="0 0 10 10" fill="none" stroke="#222">
                <path d="M.5 2.500h7v7h-7zM2 .5h7.500V8M.5 3.500h7" />
              </svg>
            </WindowButton>
            <WindowButton $close aria-label="Закрыть">
              <svg width="8" height="8" viewBox="0 0 8 8"><path d="M0 0l8 8M8 0L0 8" stroke="#fff" strokeWidth="2" /></svg>
            </WindowButton>
          </WindowButtons>
        </TitleBar>

        <Tabs>
          {tabs.map((name) => (
            <Tab key={name} $active={name === tab} onClick={() => setTab(name)}>{name}</Tab>
          ))}
          <HelpButton aria-label="Справка"><HelpIcon /></HelpButton>
        </Tabs>

        <Ribbon>
          <RibbonGroup label="Буфер обмена" width={189}>
            <BigButton $width={54}>
              <PasteIcon />
              <span>Вставить</span>
              <BigLine><Arrow /></BigLine>
            </BigButton>
            <SmallStack>
              <SmallButton><CutIcon />Вырезать</SmallButton>
              <SmallButton><CopyIcon />Копировать</SmallButton>
              <SmallButton><BrushIcon />Формат по образцу</SmallButton>
            </SmallStack>
          </RibbonGroup>

          <RibbonGroup label="Шрифт" width={261}>
            <Rows>
              <Row>
                <Combos>
                  <Combo $width={125}>
                    <select aria-label="Шрифт"><option>Times New Roman</option></select>
                    <Arrow />
                  </Combo>
                  <Combo $width={54}>
                    <select aria-label="Размер шрифта"><option>14</option></select>
                    <Arrow />
                  </Combo>
                </Combos>
                <Cluster>
                  <SizeTool $width={22} aria-label="Увеличить размер"><Glyph $size={16}>A</Glyph><Arrow up color="#2f62ad" /></SizeTool>
                  <SizeTool $width={21} aria-label="Уменьшить размер"><Glyph $size={13}>A</Glyph><Arrow color="#2f62ad" /></SizeTool>
                </Cluster>
                <Cluster>
                  <Tool $width={22} aria-label="Очистить формат"><ClearIcon /></Tool>
                </Cluster>
              </Row>
              <Row>
                <Cluster>
                  <Tool><Glyph>Ж</Glyph></Tool>
                  <Tool><Glyph $italic>К</Glyph></Tool>
                  <Tool $width={35}><Glyph $deco="underline">Ч</Glyph><Arrow /></Tool>
                  <Tool $width={26}><Glyph $size={13} $deco="line-through">abc</Glyph></Tool>
                  <Tool><Glyph>x<sub>2</sub></Glyph></Tool>
                  <Tool><Glyph>x<sup>2</sup></Glyph></Tool>
                  <Tool $width={29}><Glyph $size={15}>Aa</Glyph><Arrow /></Tool>
                </Cluster>
                <Cluster>
                  <Tool $width={33} aria-label="Цвет выделения"><HighlightIcon /><Arrow /></Tool>
                  <Tool $width={33} aria-label="Цвет текста"><FontColorIcon /><Arrow /></Tool>
                </Cluster>
              </Row>
            </Rows>
          </RibbonGroup>

          <RibbonGroup label="Абзац" width={208}>
            <Rows>
              <Row>
                <Cluster>
                  <Tool $width={33} aria-label="Маркеры"><ListIcon /><Arrow /></Tool>
                  <Tool $width={33} aria-label="Нумерация"><ListIcon marks={['1', '2', '3']} /><Arrow /></Tool>
                  <Tool $width={31} aria-label="Многоуровневый список"><MultiListIcon /><Arrow /></Tool>
                </Cluster>
                <Cluster>
                  <Tool $width={22} aria-label="Уменьшить отступ"><IndentIcon /></Tool>
                  <Tool $width={22} aria-label="Увеличить отступ"><IndentIcon right /></Tool>
                </Cluster>
                <Cluster><Tool $width={22} aria-label="Сортировка"><SortIcon /></Tool></Cluster>
                <Cluster><Tool $width={20}><Glyph $size={18}>¶</Glyph></Tool></Cluster>
              </Row>
              <Row>
                <Cluster>
                  <Tool aria-label="По левому краю"><AlignIcon widths={[14, 10, 14, 9, 14, 9]} /></Tool>
                  <Tool aria-label="По центру"><AlignIcon side="center" widths={[14, 10, 14, 10, 14, 10]} /></Tool>
                  <Tool aria-label="По правому краю"><AlignIcon side="right" widths={[14, 10, 14, 9, 14, 9]} /></Tool>
                  <Tool $width={22} $on aria-label="По ширине"><AlignIcon widths={[14, 14, 14, 14, 14, 14]} /></Tool>
                </Cluster>
                <Cluster><Tool $width={30} aria-label="Интервал"><SpacingIcon /><Arrow /></Tool></Cluster>
                <Cluster>
                  <Tool $width={33} aria-label="Заливка"><BucketIcon /><Arrow /></Tool>
                  <Tool $width={33} aria-label="Границы"><BordersIcon /><Arrow /></Tool>
                </Cluster>
              </Row>
            </Rows>
          </RibbonGroup>

          <RibbonGroup label="Стили" gap="2px" pad="0 3px 0 4px">
            <Gallery>
              <GalleryItems>
                {styleTiles.map((tile) => (
                  <GalleryItem key={tile.name} $selected={tile.selected}>
                    <Tile>
                      <Sample $look={tile.look}>{tile.sample}</Sample>
                      <TileName>{tile.name}</TileName>
                    </Tile>
                  </GalleryItem>
                ))}
              </GalleryItems>
              <GalleryScroll>
                <button aria-label="Вверх"><Arrow up color="#b5b9bf" /></button>
                <button aria-label="Вниз"><Arrow /></button>
                <button aria-label="Все стили"><CustomizeIcon /></button>
              </GalleryScroll>
            </Gallery>
            <BigButton $width={58}>
              <ChangeStylesIcon />
              <span>Изменить</span>
              <BigLine>стили <Arrow /></BigLine>
            </BigButton>
          </RibbonGroup>

          <RibbonGroup label="Редактирование" width={94} launcher={false}>
            <SmallStack>
              <SmallButton><FindIcon />Найти <Arrow /></SmallButton>
              <SmallButton><ReplaceIcon />Заменить</SmallButton>
              <SmallButton><PointerIcon />Выделить <Arrow /></SmallButton>
            </SmallStack>
          </RibbonGroup>
        </Ribbon>

        <Workspace>
          <Swoosh width="480" height="160" viewBox="0 0 480 160">
            <path d="M0 0H480C360 16 120 80 0 158z" fill="#b0cbea" opacity=".3" />
            <path d="M0 0H480C340 20 150 80 0 129z" fill="#bdd6f0" opacity=".55" />
          </Swoosh>
          <Pages>
            <PageTail>
              <TailClip>Копирование не допускается</TailClip>
            </PageTail>
            <PageGap />
            <Page>
              <RunningHead>
                <span>Математика. 9 класс. Вариант <b>37</b></span>
                <span>3</span>
              </RunningHead>
              <Paragraph $top={14}>ГРАФИКИ</Paragraph>
              <Plots>
                <MoveHandle aria-label="Переместить таблицу">
                  <svg width="13" height="13" viewBox="0 0 13 13" fill="#3f66a8">
                    <path d="M.5.500h12v12H.5z" fill="#f4f7fb" stroke="#9a9fa8" />
                    <path d="M6 2h1v9H6zM2 6h9v1H2zM6.500 1l2 2h-4zM6.500 12l2-2h-4zM1 6.500l2-2v4zM12 6.500l-2-2v4z" />
                  </svg>
                </MoveHandle>
                {plots.map((plot, i) => (
                  <Plot key={i}>
                    <span>{i + 1})</span>
                    <PlotDrawing plot={plot} />
                  </Plot>
                ))}
                <SizeHandle />
              </Plots>
              <Paragraph $top={16}>В таблице под каждой буквой укажите соответствующий номер.</Paragraph>
              <Answer>
                <Paragraph $top={37}>Ответ:</Paragraph>
                <AnswerTable>
                  <thead>
                    <tr><th>А</th><th>Б</th><th>В</th></tr>
                  </thead>
                  <tbody>
                    <tr><td /><td /><td /></tr>
                  </tbody>
                </AnswerTable>
              </Answer>
            </Page>
          </Pages>
          <ScrollRail>
            <svg width="9" height="2"><path d="M0 0h9v2H0z" fill="#33415f" /></svg>
            <Spacer $grow="0 0 4px" />
            <RulerIcon />
            <Track>
              <Arrow up color="#3d4f78" />
              <Spacer $grow="189" />
              <Thumb aria-label="Прокрутка"><i /><i /><i /><i /></Thumb>
              <Spacer $grow="547" />
              <Arrow color="#3d4f78" />
            </Track>
            <BrowseButtons>
              <button aria-label="Предыдущая страница"><DoubleArrow /></button>
              <button aria-label="Выбор объекта перехода"><BrowseDot /></button>
              <button aria-label="Следующая страница"><DoubleArrow down /></button>
            </BrowseButtons>
          </ScrollRail>
        </Workspace>

        <StatusBar>
          <StatusCell>Страница: 2 из 8</StatusCell>
          <StatusCell>Число слов: 17/1 036</StatusCell>
          <StatusCell><ProofIcon />Русский (Россия)</StatusCell>
          <StatusRight>
            <Views>
              {['print', 'read', 'web', 'outline', 'draft'].map((kind) => (
                <button key={kind} aria-label={kind}><ViewIcon kind={kind} /></button>
              ))}
            </Views>
            <ZoomValue>{zoom}%</ZoomValue>
            <button aria-label="Уменьшить" onClick={() => setZoom(zoom - 10)}><ZoomButtonIcon /></button>
            <ZoomSlider
              type="range"
              aria-label="Масштаб"
              min="10"
              max="310"
              value={zoom}
              onChange={(e) => setZoom(Number(e.target.value))}
            />
            <button aria-label="Увеличить" onClick={() => setZoom(zoom + 10)}><ZoomButtonIcon plus /></button>
          </StatusRight>
        </StatusBar>

        <Taskbar>
          <TaskButton aria-label="Internet Explorer"><IeIcon /></TaskButton>
          <TaskButton $open aria-label="Проводник"><FolderIcon /></TaskButton>
          <TaskButton aria-label="Монитор"><MonitorIcon /></TaskButton>
          <TaskButton $open aria-label="Skype"><SkypeIcon /></TaskButton>
          <TaskButton $open aria-label="Chrome"><ChromeIcon /></TaskButton>
          <TaskButton aria-label="Плеер"><PlayerIcon /></TaskButton>
          <TaskButton $open $active aria-label="Word"><WordIcon /></TaskButton>
          <Tray>
            <button aria-label="Скрытые значки"><Arrow up color="#fff" /></button>
            <SteamIcon />
            <CheckTrayIcon />
            <TargetTrayIcon />
            <NetworkTrayIcon />
            <VolumeTrayIcon />
            <TrayText>ENG</TrayText>
            <Clock>21:48<br />12.08.2016</Clock>
          </Tray>
        </Taskbar>
      </Window>
    </>
  );
}

export default App;
